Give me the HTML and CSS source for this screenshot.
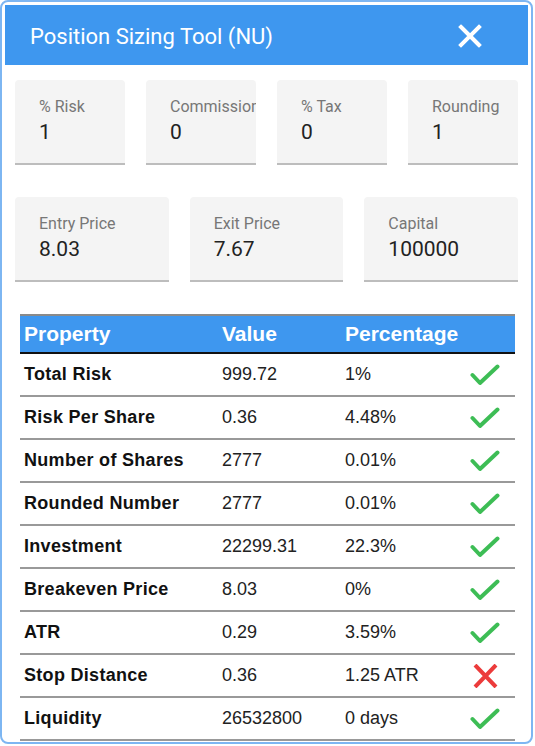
FILE: index.html
```html
<!DOCTYPE html>
<html lang="en">
<head>
    <meta charset="UTF-8">
    <meta name="viewport" content="width=device-width, initial-scale=1.0">
    <title>Position Sizing Tool</title>
    <link rel="stylesheet" href="styles.css">
</head>
<body>
    <div class="dialog">
        <div class="dialog-header">
            <h1>Position Sizing Tool (NU)</h1>
            <button class="close-btn" aria-label="Close">
                <svg width="24" height="24" viewBox="0 0 24 24">
                    <path d="M3 3 L21 21 M21 3 L3 21" stroke="#fff" stroke-width="4" stroke-linecap="square" fill="none"/>
                </svg>
            </button>
        </div>

        <div class="dialog-body">
            <div class="field-row four">
                <div class="field"><span class="field-label">% Risk</span><span class="field-value">1</span></div>
                <div class="field"><span class="field-label">Commission</span><span class="field-value">0</span></div>
                <div class="field"><span class="field-label">% Tax</span><span class="field-value">0</span></div>
                <div class="field"><span class="field-label">Rounding</span><span class="field-value">1</span></div>
            </div>

            <div class="field-row three">
                <div class="field"><span class="field-label">Entry Price</span><span class="field-value">8.03</span></div>
                <div class="field"><span class="field-label">Exit Price</span><span class="field-value">7.67</span></div>
                <div class="field"><span class="field-label">Capital</span><span class="field-value">100000</span></div>
            </div>

            <table class="results">
                <thead>
                    <tr>
                        <th class="col-prop">Property</th>
                        <th class="col-val">Value</th>
                        <th class="col-pct">Percentage</th>
                        <th class="col-ok"></th>
                    </tr>
                </thead>
                <tbody id="resultRows"></tbody>
            </table>
        </div>
    </div>

    <script>
        const rows = [
            ["Total Risk", "999.72", "1%", true],
            ["Risk Per Share", "0.36", "4.48%", true],
            ["Number of Shares", "2777", "0.01%", true],
            ["Rounded Number", "2777", "0.01%", true],
            ["Investment", "22299.31", "22.3%", true],
            ["Breakeven Price", "8.03", "0%", true],
            ["ATR", "0.29", "3.59%", true],
            ["Stop Distance", "0.36", "1.25 ATR", false],
            ["Liquidity", "26532800", "0 days", true]
        ];

        const checkIcon = '<svg class="status" width="32" height="24" viewBox="0 0 32 24"><path d="M4.5 12 L12 20 L29.5 3.5" stroke="#3dbd55" stroke-width="4" stroke-linecap="round" stroke-linejoin="round" fill="none"/></svg>';
        const crossIcon = '<svg class="status" width="32" height="24" viewBox="0 0 32 24"><path d="M7 1 L28 23 M28 1 L7 23" stroke="#ec3b3b" stroke-width="4" fill="none"/></svg>';

        const tbody = document.getElementById("resultRows");
        rows.forEach(([name, value, pct, ok]) => {
            const tr = document.createElement("tr");
            tr.innerHTML = `
                <td class="col-prop">${name}</td>
                <td class="col-val">${value}</td>
                <td class="col-pct">${pct}</td>
                <td class="col-ok">${ok ? checkIcon : crossIcon}</td>
            `;
            tbody.appendChild(tr);
        });
    </script>
</body>
</html>
```

FILE: styles.css
```css
body {
    margin: 0;
    padding: 0;
    background-color: #fff;
    font-family: Roboto, "Liberation Sans", sans-serif;
}
.dialog {
    width: 533px;
    height: 744px;
    box-sizing: border-box;
    border: 2px solid #7db6f2;
    border-radius: 8px;
    padding: 3px;
    background-color: #fff;
    overflow: hidden;
}
.dialog-header {
    display: flex;
    align-items: center;
    justify-content: space-between;
    height: 60px;
    background-color: #3e97ef;
    padding: 2px 46px 0 25px;
    box-sizing: border-box;
}
.dialog-header h1 {
    margin: 0;
    color: #fff;
    font-size: 22px;
    font-weight: 400;
}
.close-btn {
    background: none;
    border: none;
    padding: 0;
    width: 24px;
    height: 24px;
    cursor: pointer;
}
.close-btn svg {
    display: block;
}
.dialog-body {
    padding: 15px 10px 0;
}
.field-row {
    display: grid;
    gap: 21px;
    margin-bottom: 32px;
}
.field-row.four {
    grid-template-columns: repeat(4, 1fr);
}
.field-row.three {
    grid-template-columns: repeat(3, 1fr);
}
.field {
    display: flex;
    flex-direction: column;
    height: 85px;
    padding: 17px 0 0 24px;
    box-sizing: border-box;
    background-color: #f4f4f4;
    border-radius: 4px 4px 0 0;
    border-bottom: 2px solid #bdbdbd;
    overflow: hidden;
    white-space: nowrap;
}
.field-label {
    font-size: 16px;
    line-height: 20px;
    color: #777;
}
.field-value {
    font-size: 21px;
    line-height: 30px;
    color: #222;
}
.results {
    width: 495px;
    margin: 0 4px 0 5px;
    border-collapse: collapse;
    font-family: "Liberation Sans", Arial, sans-serif;
    font-size: 18px;
}
.results th {
    height: 36px;
    padding: 0 4px;
    text-align: left;
    color: #fff;
    font-size: 21px;
    font-weight: 700;
    background-color: #3e97ef;
    border-top: 2px solid #8a8a8a;
    border-bottom: 2px solid #111;
}
.results td {
    height: 41px;
    padding: 0 4px;
    color: #222;
    border-bottom: 2px solid #999;
}
.results td.col-prop {
    font-weight: 700;
    color: #111;
    letter-spacing: 0.3px;
}
.col-prop {
    width: 190px;
}
.col-val {
    width: 115px;
}
.col-pct {
    width: 117px;
}
.results .col-ok {
    padding: 0 0 0 2px;
}
.status {
    display: block;
}
```
